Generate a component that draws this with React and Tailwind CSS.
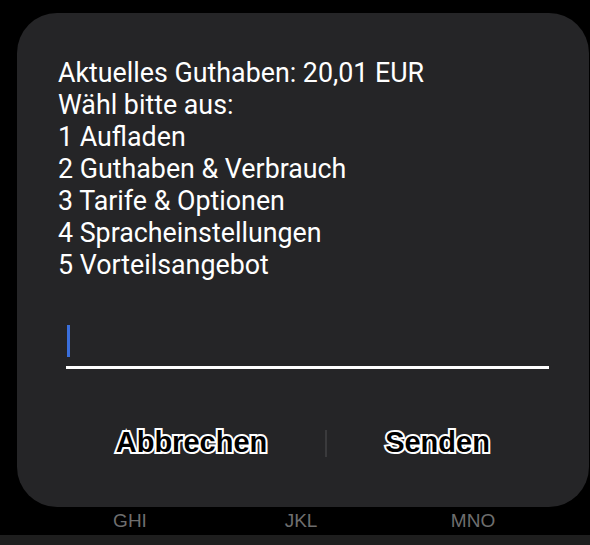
const lines = [
  "Aktuelles Guthaben: 20,01 EUR",
  "Wähl bitte aus:",
  "1 Aufladen",
  "2 Guthaben & Verbrauch",
  "3 Tarife & Optionen",
  "4 Spracheinstellungen",
  "5 Vorteilsangebot",
];

const outlined =
  "text-black text-[29px] font-bold [font-family:'Liberation_Sans',Arial,sans-serif] [-webkit-text-stroke:4px_white] [paint-order:stroke_fill]";

export default function App() {
  return (
    <div className="w-[590px] h-[545px] bg-black flex flex-col overflow-hidden">
      {/* USSD dialog */}
      <div className="mt-[13px] ml-[17px] w-[572px] h-[494px] shrink-0 rounded-[40px] bg-[#252527] flex flex-col">
        <div className="pt-[44px] pl-[41px] text-white text-[26.8px] leading-[32px] [font-family:Roboto,'Noto_Sans',sans-serif]">
          {lines.map((l) => (
            <div key={l}>{l}</div>
          ))}
        </div>

        {/* input */}
        <div className="mt-[44px] ml-[49px] w-[483px] flex flex-col">
          <div className="w-[3px] h-[32px] ml-[1px] bg-[#3a6fdc]" />
          <div className="mt-[9px] h-[3px] bg-white" />
        </div>

        {/* buttons */}
        <div className="mt-[50px] ml-[41px] h-[48px] flex items-center">
          <div className="w-[267px] flex justify-center">
            <span className={outlined}>Abbrechen</span>
          </div>
          <div className="w-[2px] h-[27px] bg-[#3a3a3c]" />
          <div className="w-[221px] flex justify-center">
            <span className={outlined}>Senden</span>
          </div>
        </div>
      </div>

      {/* keyboard peeking below */}
      <div className="h-[28px] shrink-0 relative text-[#6e6e6e] text-[19px] leading-[28px] [font-family:'Liberation_Sans',Arial,sans-serif]">
        <span className="absolute left-[130px] -translate-x-1/2">GHI</span>
        <span className="absolute left-[301px] -translate-x-1/2">JKL</span>
        <span className="absolute left-[473px] -translate-x-1/2">MNO</span>
      </div>
      <div className="flex-1 bg-[#1e1e1e]" />
    </div>
  );
}
